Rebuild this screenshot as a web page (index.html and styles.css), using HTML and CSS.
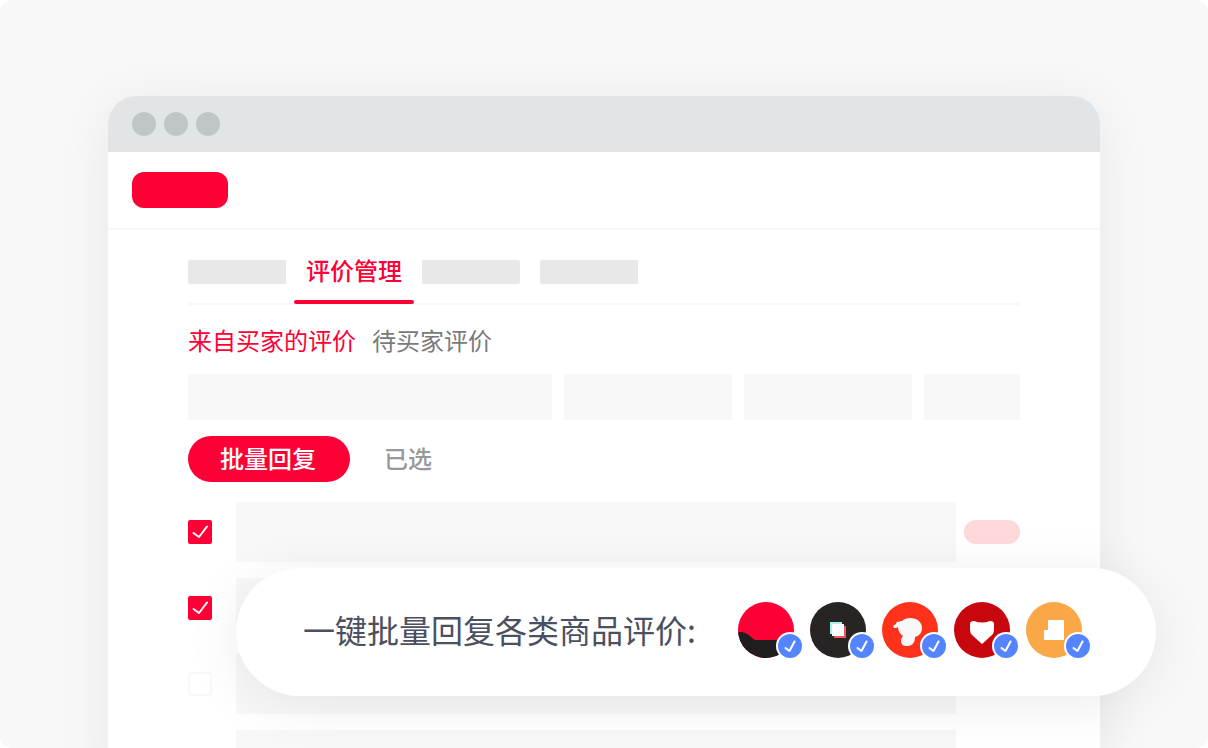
FILE: index.html
```html
<!DOCTYPE html>
<html lang="zh-CN">
<head>
    <meta charset="UTF-8">
    <meta name="viewport" content="width=device-width, initial-scale=1.0">
    <title>批量回复</title>
    <link rel="stylesheet" href="styles.css">
</head>
<body>
    <svg class="symbols" aria-hidden="true">
        <symbol id="tick" viewBox="0 0 24 24">
            <path d="M5.5 13L11 17L19 6.5" />
        </symbol>
        <symbol id="badge-tick" viewBox="0 0 24 24">
            <path d="M7.5 14L11.500 17L16.500 7.500" />
        </symbol>
    </svg>

    <div class="scene">
        <div class="window">
            <div class="title-bar">
                <span class="dot"></span>
                <span class="dot"></span>
                <span class="dot"></span>
            </div>
            <header class="header">
                <div class="logo"></div>
            </header>
            <main class="content">
                <nav class="tabs">
                    <span class="tab-block"></span>
                    <a href="#" class="tab-active">评价管理</a>
                    <span class="tab-block"></span>
                    <span class="tab-block"></span>
                </nav>
                <nav class="sub-tabs">
                    <a href="#" class="active">来自买家的评价</a>
                    <a href="#">待买家评价</a>
                </nav>
                <div class="filters">
                    <div></div>
                    <div></div>
                    <div></div>
                    <div></div>
                </div>
                <div class="actions">
                    <button type="button" class="reply-btn">批量回复</button>
                    <span class="selected">已选</span>
                </div>
                <div class="rows">
                    <div class="row">
                        <label class="check">
                            <input type="checkbox" aria-label="选择评价 1" checked>
                            <svg><use href="#tick" /></svg>
                        </label>
                        <div class="row-bar"></div>
                        <div class="row-pill"></div>
                    </div>
                    <div class="row">
                        <label class="check">
                            <input type="checkbox" aria-label="选择评价 2" checked>
                            <svg><use href="#tick" /></svg>
                        </label>
                        <div class="row-bar"></div>
                        <div class="row-pill"></div>
                    </div>
                    <div class="row">
                        <label class="check">
                            <input type="checkbox" aria-label="选择评价 3">
                        </label>
                        <div class="row-bar"></div>
                        <div class="row-pill"></div>
                    </div>
                    <div class="row">
                        <label class="check">
                            <input type="checkbox" aria-label="选择评价 4">
                        </label>
                        <div class="row-bar"></div>
                        <div class="row-pill"></div>
                    </div>
                </div>
            </main>
        </div>

        <div class="banner">
            <p>一键批量回复各类商品评价:</p>
            <div class="platforms">
                <div class="platform red">
                    <svg class="platform-icon" viewBox="0 0 56 56">
                        <path fill="#1e1e1e" d="M0 30C7 29.500 10 32 13 35C15 37 16 38 18 38H56V56H0Z" />
                    </svg>
                    <span class="badge"><svg><use href="#badge-tick" /></svg></span>
                </div>
                <div class="platform black">
                    <svg class="platform-icon" viewBox="0 0 56 56">
                        <path fill="#a0f5e6" d="M20 20H32V32H20Z" />
                        <path fill="#f55555" d="M24 24H36V36H24Z" />
                        <path fill="#fff" d="M22 22H34V34H22Z" />
                    </svg>
                    <span class="badge"><svg><use href="#badge-tick" /></svg></span>
                </div>
                <div class="platform orange-red">
                    <svg class="platform-icon" viewBox="0 0 56 56">
                        <path fill="#f8f8f8" d="M11 24L14 22L15 19.500L17 20L18 19H20C22 17 25 16 28 16C35 16 40 20 40 26C40 31 37 34 33 35C33 41 30 44 25 44C21 44 19 42 19 39C19 37 20 35 21 34C18 32 16 29 16 25L14 26L12 26Z" />
                    </svg>
                    <span class="badge"><svg><use href="#badge-tick" /></svg></span>
                </div>
                <div class="platform dark-red">
                    <svg class="platform-icon" viewBox="0 0 56 56">
                        <path fill="#fff" d="M16 22Q16 19 20 19Q24 20.500 28 20.500Q32 20.500 36 19Q40 19 40 22V28Q40 31 38 33L28 42L18 33Q16 31 16 28Z" />
                    </svg>
                    <span class="badge"><svg><use href="#badge-tick" /></svg></span>
                </div>
                <div class="platform yellow">
                    <svg class="platform-icon" viewBox="0 0 56 56">
                        <path fill="#fff" d="M22 18H38V38H18V28H22Z" />
                    </svg>
                    <span class="badge"><svg><use href="#badge-tick" /></svg></span>
                </div>
            </div>
        </div>
    </div>
</body>
</html>
```
FILE: styles.css
```css
* {
    box-sizing: border-box;
}
body {
    margin: 0;
    background: #fff;
    font-family: "Noto Sans CJK SC", sans-serif;
    font-size: 24px;
    line-height: 36px;
}
a {
    color: inherit;
    text-decoration: none;
}
.symbols {
    display: none;
}
.scene {
    position: relative;
    height: 100vh;
    padding: 96px 108px 0;
    overflow: hidden;
    background: #f8f8f8;
    border-radius: 12px;
}
.window {
    min-height: 100%;
    background: #fff;
    border-radius: 28px 28px 0 0;
    box-shadow: 0 8px 56px rgba(0, 0, 0, 0.07);
}
.title-bar {
    display: flex;
    align-items: center;
    gap: 8px;
    height: 56px;
    padding: 0 24px;
    background: #e1e5e8;
    border-radius: 28px 28px 0 0;
}
.dot {
    width: 24px;
    height: 24px;
    background: #c1c6c9;
    border-radius: 50%;
}
.header {
    padding: 20px 24px;
    border-bottom: 2px solid #f8f8f8;
}
.logo {
    width: 96px;
    height: 36px;
    background: #ff0036;
    border-radius: 12px;
}
.content {
    padding: 0 80px;
}

/* tabs */
.tabs {
    display: flex;
    align-items: center;
    gap: 20px;
    height: 75px;
    padding-top: 10px;
    border-bottom: 2px solid #f8f8f8;
}
.tab-block {
    width: 98px;
    height: 24px;
    background: #e8e8e8;
    border-radius: 2px;
}
.tab-active {
    position: relative;
    padding-bottom: 3px;
    color: #ff0036;
    font-weight: 500;
}
.tab-active::after {
    content: "";
    position: absolute;
    left: -12px;
    right: -12px;
    bottom: -13px;
    height: 4px;
    background: #ff0036;
    border-radius: 2px;
}
.sub-tabs {
    display: flex;
    gap: 16px;
    padding: 17px 0 16px;
    color: #7a7a7a;
}
.sub-tabs .active {
    color: #ff0036;
}

.filters {
    display: grid;
    grid-template-columns: 364fr 168fr 168fr 96fr;
    gap: 12px;
}
.filters div {
    height: 46px;
    background: #f8f8f8;
}
.actions {
    display: flex;
    align-items: center;
    gap: 34px;
    padding: 16px 0 20px;
}
.reply-btn {
    height: 46px;
    padding: 0 34px 2px 32px;
    border: none;
    border-radius: 23px;
    background: #ff0036;
    color: #fff;
    font: inherit;
    font-weight: 500;
    cursor: pointer;
}
.selected {
    padding-bottom: 2px;
    color: #999;
    font-weight: 500;
}

/* review rows */
.rows {
    display: flex;
    flex-direction: column;
    gap: 16px;
}
.row {
    display: flex;
    align-items: center;
}
.check {
    display: grid;
    width: 24px;
    height: 24px;
    margin-right: 24px;
}
.check input,
.check svg {
    grid-area: 1 / 1;
    width: 24px;
    height: 24px;
    margin: 0;
}
.check input {
    appearance: none;
    border: 2px solid #f8f8f8;
    border-radius: 2px;
    background: #fff;
}
.check input:checked {
    border-color: #ff0036;
    background: #ff0036;
}
.check svg,
.badge svg {
    fill: none;
    stroke: #fff;
    stroke-width: 2px;
    stroke-linecap: round;
    stroke-linejoin: round;
    pointer-events: none;
}
.row-bar {
    flex: 1;
    height: 60px;
    background: #f8f8f8;
}
.row-pill {
    width: 56px;
    height: 24px;
    margin-left: 8px;
    background: #ffd9d9;
    border-radius: 12px;
}

/* floating banner over the window */
.banner {
    position: absolute;
    left: 236px;
    right: 52px;
    bottom: 52px;
    display: flex;
    align-items: center;
    justify-content: space-between;
    height: 128px;
    padding: 0 74px 4px 67px;
    background: #fff;
    border-radius: 64px;
    box-shadow: 0 8px 56px rgba(0, 0, 0, 0.08);
}
.banner p {
    margin: 0;
    padding-bottom: 2px;
    color: #4a5060;
    font-size: 32px;
    line-height: 48px;
}
.platforms {
    display: flex;
    gap: 16px;
}
.platform {
    position: relative;
    width: 56px;
    height: 56px;
}
.platform-icon {
    display: block;
    width: 56px;
    height: 56px;
    border-radius: 50%;
}
.red .platform-icon {
    background: #ff0036;
}
.black .platform-icon {
    background: #282423;
}
.orange-red .platform-icon {
    background: #ff321c;
}
.dark-red .platform-icon {
    background: #c8060d;
}
.yellow .platform-icon {
    background: #faa748;
}
.badge {
    position: absolute;
    right: -8px;
    bottom: 0;
    width: 24px;
    height: 24px;
    background: #5484ff;
    border-radius: 50%;
    box-shadow: 0 0 0 2px #fff;
}
.badge svg {
    display: block;
    width: 24px;
    height: 24px;
}
```
